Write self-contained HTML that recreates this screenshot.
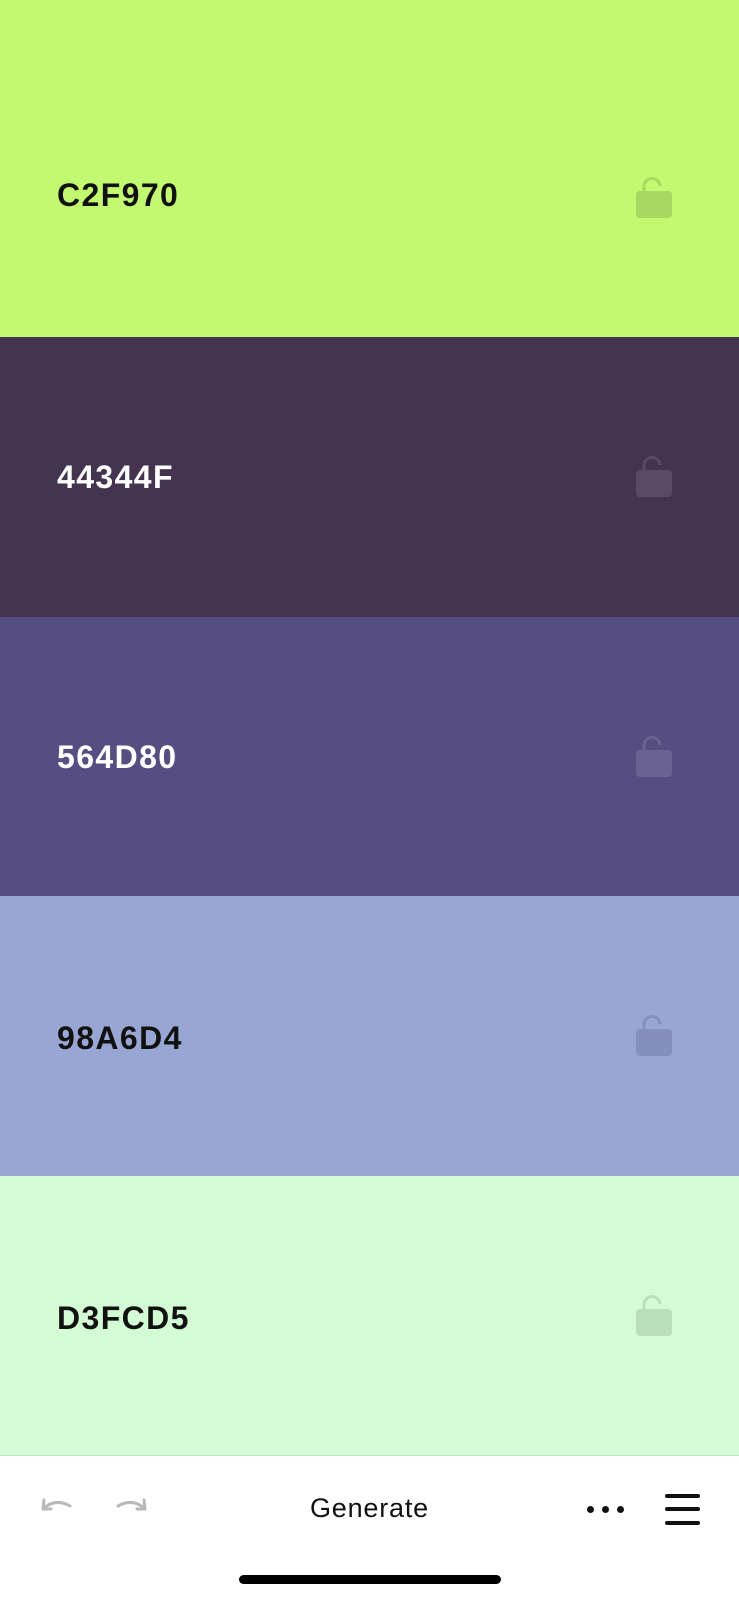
<!DOCTYPE html>
<html><head><meta charset="utf-8"><style>
*{margin:0;padding:0;box-sizing:border-box}
body{width:739px;height:1600px;overflow:hidden;font-family:"Liberation Sans",sans-serif;background:#fff;position:relative}
.s{position:absolute;left:0;width:739px}
.t{position:absolute;left:57px;font-weight:bold;font-size:32px;letter-spacing:1.4px}
.lk{position:absolute;left:635px;width:38px;height:44px}
</style></head><body>
<div class="s" style="top:0;height:337px;background:#c2f970"><div class="t" style="top:177px;color:#111">C2F970</div>
<svg class="lk" style="top:175px" viewBox="0 0 38 44"><path d="M9 20 V12 a8 8 0 0 1 16 -1" fill="none" stroke="#a8d862" stroke-width="3"/><rect x="1" y="16" width="36" height="27" rx="4" fill="#a8d862"/></svg></div>
<div class="s" style="top:337px;height:280px;background:#44344f"><div class="t" style="top:122px;color:#fff">44344F</div>
<svg class="lk" style="top:117px" viewBox="0 0 38 44"><path d="M9 20 V12 a8 8 0 0 1 16 -1" fill="none" stroke="#5a4b64" stroke-width="3"/><rect x="1" y="16" width="36" height="27" rx="4" fill="#5a4b64"/></svg></div>
<div class="s" style="top:617px;height:279px;background:#564d80"><div class="t" style="top:122px;color:#fff">564D80</div>
<svg class="lk" style="top:117px" viewBox="0 0 38 44"><path d="M9 20 V12 a8 8 0 0 1 16 -1" fill="none" stroke="#6a6290" stroke-width="3"/><rect x="1" y="16" width="36" height="27" rx="4" fill="#6a6290"/></svg></div>
<div class="s" style="top:896px;height:280px;background:#98a6d4"><div class="t" style="top:124px;color:#111">98A6D4</div>
<svg class="lk" style="top:117px" viewBox="0 0 38 44"><path d="M9 20 V12 a8 8 0 0 1 16 -1" fill="none" stroke="#8490bb" stroke-width="3"/><rect x="1" y="16" width="36" height="27" rx="4" fill="#8490bb"/></svg></div>
<div class="s" style="top:1176px;height:280px;background:#d3fcd5;border-bottom:1px solid #bfe8c1"><div class="t" style="top:124px;color:#111">D3FCD5</div>
<svg class="lk" style="top:117px" viewBox="0 0 38 44"><path d="M9 20 V12 a8 8 0 0 1 16 -1" fill="none" stroke="#b8dfba" stroke-width="3"/><rect x="1" y="16" width="36" height="27" rx="4" fill="#b8dfba"/></svg></div>
<svg style="position:absolute;left:38px;top:1496px" width="36" height="24" viewBox="0 0 36 24"><path d="M6 4 L5 13 L13 13 M6 12 Q18 2 32 10" fill="none" stroke="#b8b8b8" stroke-width="3" stroke-linecap="round" stroke-linejoin="round"/></svg>
<svg style="position:absolute;left:114px;top:1496px" width="36" height="24" viewBox="0 0 36 24"><path d="M30 4 L31 13 L23 13 M30 12 Q18 2 4 10" fill="none" stroke="#b8b8b8" stroke-width="3" stroke-linecap="round" stroke-linejoin="round"/></svg>
<div style="position:absolute;left:0;width:739px;top:1493px;text-align:center;font-size:27px;letter-spacing:0.8px;color:#111">Generate</div>
<div style="position:absolute;left:587px;top:1506px"><span style="position:absolute;left:0;width:7px;height:7px;border-radius:50%;background:#111"></span><span style="position:absolute;left:15px;width:7px;height:7px;border-radius:50%;background:#111"></span><span style="position:absolute;left:30px;width:7px;height:7px;border-radius:50%;background:#111"></span></div>
<div style="position:absolute;left:665px;top:1494px;width:35px;height:4px;background:#111;border-radius:2px"></div>
<div style="position:absolute;left:665px;top:1507px;width:35px;height:4px;background:#111;border-radius:2px"></div>
<div style="position:absolute;left:665px;top:1521px;width:35px;height:4px;background:#111;border-radius:2px"></div>
<div style="position:absolute;left:239px;top:1575px;width:262px;height:9px;background:#000;border-radius:5px"></div>
</body></html>
